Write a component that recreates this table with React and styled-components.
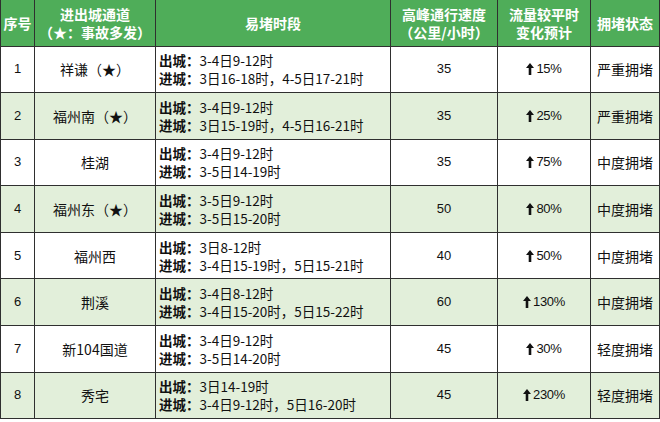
import React from "react"
import styled, { createGlobalStyle } from "styled-components"

const GlobalStyle = createGlobalStyle`
  html, body {
    margin: 0;
    padding: 0;
    background: #fff;
  }
  body {
    font-family: "Noto Sans CJK SC", "Liberation Sans", sans-serif;
    color: #111;
    text-spacing-trim: space-all;
  }
`

const Table = styled.table`
  border-collapse: collapse;
  table-layout: fixed;
  width: 659px;
  font-size: 14px;
`

const HeadCell = styled.th`
  background: #4fad59;
  color: #fff;
  font-weight: bold;
  font-size: 14px;
  line-height: 18px;
  border: 1px solid #2f2f2f;
  border-top: none;
  padding: 0;
  text-align: center;
  vertical-align: middle;
  text-spacing-trim: space-all;
`

const HeadRow = styled.tr`
  height: 46px;
`

const Row = styled.tr`
  height: 46.6px;
  background: ${(p) => (p.$shade ? "#e2efda" : "#fff")};
`

const Cell = styled.td`
  border: 1px solid #2f2f2f;
  padding: ${(p) => (p.$left ? "0 0 0 3px" : "0")};
  text-align: ${(p) => (p.$left ? "left" : "center")};
  vertical-align: middle;
  line-height: 18px;
  font-family: ${(p) =>
    p.$num ? '"Liberation Sans", sans-serif' : '"Noto Sans CJK SC", sans-serif'};
  font-size: ${(p) => (p.$num ? "13px" : p.$left ? "13.5px" : "14px")};
  white-space: nowrap;
  text-spacing-trim: space-all;
`

const Label = styled.b`
  font-weight: bold;
`

const Trend = styled.span`
  display: inline-flex;
  align-items: center;
  gap: 2px;
  font-family: "Liberation Sans Narrow", "Liberation Sans", sans-serif;
  font-size: 13px;
  letter-spacing: -0.3px;
`

const Arrow = () => (
  <svg width="8" height="12" viewBox="0 0 8 12">
    <polygon points="4,0 8,5 5.3,5 5.3,12 2.7,12 2.7,5 0,5" fill="#111" />
  </svg>
)

const rows = [
  ["1", "祥谦（★）", "3-4日9-12时", "3日16-18时，4-5日17-21时", "35", "15%", "严重拥堵"],
  ["2", "福州南（★）", "3-4日9-12时", "3日15-19时，4-5日16-21时", "35", "25%", "严重拥堵"],
  ["3", "桂湖", "3-4日9-12时", "3-5日14-19时", "35", "75%", "中度拥堵"],
  ["4", "福州东（★）", "3-5日9-12时", "3-5日15-20时", "50", "80%", "中度拥堵"],
  ["5", "福州西", "3日8-12时", "3-4日15-19时，5日15-21时", "40", "50%", "中度拥堵"],
  ["6", "荆溪", "3-4日8-12时", "3-4日15-20时，5日15-22时", "60", "130%", "中度拥堵"],
  ["7", "新104国道", "3-4日9-12时", "3-5日14-20时", "45", "30%", "轻度拥堵"],
  ["8", "秀宅", "3日14-19时", "3-4日9-12时，5日16-20时", "45", "230%", "轻度拥堵"],
]

export default function App() {
  return (
    <>
      <GlobalStyle />
      <Table>
        <colgroup>
          <col style={{ width: 34 }} />
          <col style={{ width: 121 }} />
          <col style={{ width: 235 }} />
          <col style={{ width: 107 }} />
          <col style={{ width: 93 }} />
          <col style={{ width: 69 }} />
        </colgroup>
        <thead>
          <HeadRow>
            <HeadCell>序号</HeadCell>
            <HeadCell>
              进出城通道
              <br />
              （★：事故多发）
            </HeadCell>
            <HeadCell>易堵时段</HeadCell>
            <HeadCell>
              高峰通行速度
              <br />
              （公里/小时）
            </HeadCell>
            <HeadCell>
              流量较平时
              <br />
              变化预计
            </HeadCell>
            <HeadCell>拥堵状态</HeadCell>
          </HeadRow>
        </thead>
        <tbody>
          {rows.map(([no, road, out, inn, speed, pct, state], i) => (
            <Row key={no} $shade={i % 2 === 1}>
              <Cell $num>{no}</Cell>
              <Cell>{road}</Cell>
              <Cell $left>
                <Label>出城：</Label>
                {out}
                <br />
                <Label>进城：</Label>
                {inn}
              </Cell>
              <Cell $num>{speed}</Cell>
              <Cell>
                <Trend>
                  <Arrow />
                  {pct}
                </Trend>
              </Cell>
              <Cell>{state}</Cell>
            </Row>
          ))}
        </tbody>
      </Table>
    </>
  )
}
